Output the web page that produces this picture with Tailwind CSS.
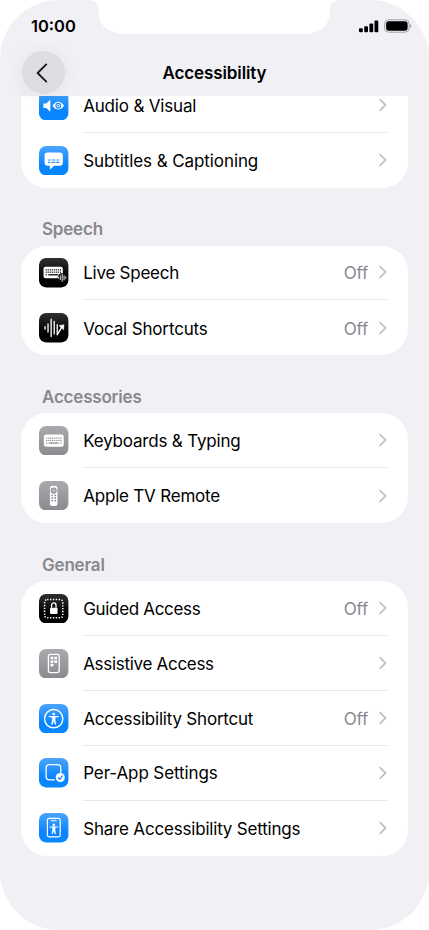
<!DOCTYPE html>
<html lang="en">
<head>
<meta charset="utf-8">
<meta name="viewport" content="width=device-width, initial-scale=1">
<title>Accessibility</title>
<script src="https://cdn.jsdelivr.net/npm/@tailwindcss/browser@4"></script>
</head>
<body class="bg-white font-['Inter','Liberation_Sans',sans-serif] text-black">
<svg width="0" height="0" class="absolute">
  <defs>
    <linearGradient id="blue" x1="0" y1="0" x2="0" y2="1"><stop offset="0" stop-color="#4ba5fc"/><stop offset=".65" stop-color="#0a84fe"/><stop offset="1" stop-color="#0788ff"/></linearGradient>
    <linearGradient id="gray" x1="0" y1="0" x2="0" y2="1"><stop offset="0" stop-color="#a9a9ae"/><stop offset="1" stop-color="#8a8a8f"/></linearGradient>
    <linearGradient id="dark" x1="0" y1="0" x2="0" y2="1"><stop offset="0" stop-color="#303030"/><stop offset=".6" stop-color="#050505"/><stop offset="1" stop-color="#000"/></linearGradient>
    <symbol id="chev" viewBox="0 0 8 14"><path d="M1.200 1.700 6.500 7 1.200 12.300" fill="none" stroke="#c2c2c6" stroke-width="1.800" stroke-linecap="round" stroke-linejoin="round"/></symbol>
    <symbol id="person" viewBox="0 0 12 14"><circle cx="6" cy="1.800" r="1.500" fill="#fff"/><path d="M1.300 4.600H10.700" stroke="#fff" stroke-width="1.300" stroke-linecap="round"/><path d="M4.300 4.400H7.700V8.500L8.500 12.800L7.300 13L6.200 9.600H5.800L4.700 13L3.500 12.800L4.300 8.500Z" fill="#fff" stroke="#fff" stroke-width=".3" stroke-linejoin="round"/></symbol>
  </defs>
</svg>
<div class="relative w-[429px] h-[930px] overflow-hidden rounded-[59px] bg-[#f1f0f5]">
  <svg class="absolute left-0 top-0" width="429" height="36" viewBox="0 0 429 36"><path d="M88 0C96 0 98.500 4 98.500 11C98.500 26 109 34.200 127 34.200H302C319 34.200 330 26 330 11C330 4 332 0 341 0Z" fill="#fff"/></svg>

  <header class="relative z-10 h-[95.500px]">
    <div class="flex h-[52px] items-center justify-between pl-[31px] pr-[17px]">
      <span class="text-[16.500px] font-semibold">10:00</span>
      <div class="flex items-center gap-[5.500px]">
        <svg width="21" height="13" viewBox="0 0 21 13"><rect x="1" y="8.300" width="3.800" height="4" rx="1"/><rect x="6.200" y="6.200" width="3.800" height="6.100" rx="1"/><rect x="11.400" y="3.500" width="3.800" height="8.800" rx="1"/><rect x="16.500" y=".5" width="3.800" height="11.800" rx="1"/></svg>
        <svg width="28" height="14" viewBox="0 0 28 14"><rect x=".6" y=".8" width="24.500" height="12.400" rx="4" fill="none" stroke="#a3a3a6"/><rect x="2.100" y="2.300" width="21.500" height="9.400" rx="2.700"/><path d="M26.200 5v4c1.600-.5 1.600-3.500 0-4" fill="#9a9a9d"/></svg>
      </div>
    </div>
    <h1 class="w-full pt-[10px] text-center text-[17px] leading-[23px] font-semibold tracking-[-0.120px]">Accessibility</h1>
    <div class="absolute left-[21px] top-[50px] flex h-[45px] w-[45px] items-center justify-center rounded-full border border-[#ececef] bg-[#dcdde1] shadow-[0_2px_18px_rgba(0,0,0,0.06)]">
      <svg width="14" height="22" viewBox="0 0 14 22" class="mr-[3px]"><path d="M11.300 2.400 2.600 11l8.700 8.600" fill="none" stroke="#161616" stroke-width="1.800" stroke-linecap="round" stroke-linejoin="round"/></svg>
    </div>
  </header>

  <main id="main" class="flex flex-col pl-[21px] pr-[21px] text-[17px]"></main>
</div>
<script>
const kb = (c) => {
  let s = '';
  for (let r = 0; r < 2; r++) for (let i = 0; i < 8; i++) s += `<rect x="${7 + i * 2}" y="${11.4 + r * 2.3}" width="1.2" height="1.200" fill="${c}"/>`;
  return s + `<rect x="7" y="16.200" width="1.200" height="1.300" fill="${c}"/><rect x="9.600" y="16.200" width="9.800" height="1.300" fill="${c}"/><rect x="21" y="16.200" width="1.200" height="1.300" fill="${c}"/>`;
};
const wave = (bars, w) => bars.map(([x, a, b]) => `<path d="M${x} ${a}V${b}" stroke="#fff" stroke-width="${w}" stroke-linecap="round"/>`).join('');
const icons = {
  av: ['blue', `<path d="M4.800 12.300H7.200L10.500 9.200Q11.200 8.700 11.200 9.700V19.500Q11.200 20.400 10.500 19.900L7.200 16.800H4.800Q4.300 16.800 4.300 16.200V12.900Q4.300 12.300 4.800 12.300Z" fill="#fff"/><path d="M13.300 14.500Q16 10.700 19 10.700Q22 10.700 24.700 14.500Q22 18.300 19 18.300Q16 18.300 13.300 14.500Z" fill="#fff"/><circle cx="19" cy="14.500" r="2.300" fill="#fff" stroke="#178bfe" stroke-width="1.100"/><circle cx="19" cy="14.500" r=".9" fill="#178bfe"/>`],
  cc: ['blue', `<path d="M8.500 6.300h12q3 0 3 3v7.200q0 3-3 3h-5.700l-3.500 3.500q-.6.400-.6-.5v-3H8.500q-3 0-3-3V9.300q0-3 3-3Z" fill="#fff"/><path d="M8.800 13.800h3.200m1 0h3.200m1 0h3M8.800 16.200h2.200m1 0h4m1 0h3.200" stroke="#3798fb" stroke-width="1.100"/>`],
  live: ['dark', `<rect x="4.500" y="8.600" width="19" height="11.500" rx="2" fill="#fff"/><g transform="translate(-.5 -.3)">${kb('#111')}</g><circle cx="23" cy="19.500" r="4.600" fill="#111"/>${wave([[19.300,18.700,20.100],[21.100,17.700,21.300],[22.900,15.900,23],[24.700,17.500,21.400],[26.300,18.700,20.200]], .8)}`],
  vocal: ['dark', wave([[6,13.500,15.800],[8.900,10.800,18.700],[12,6,23.300],[15,8.300,20.600],[18,11.500,21.500]], 1.300) + `<path d="M18.200 21 22.500 14" stroke="#fff" stroke-width="1.400" fill="none" stroke-linecap="round"/><path d="M19.800 12.500 24.600 11.600 24.300 16.500Z" fill="#fff" stroke="#fff" stroke-width=".5" stroke-linejoin="round"/>`],
  kb: ['gray', `<rect x="4.800" y="8.400" width="19.600" height="12" rx="2.200" fill="#fff"/>${kb('#8e8e93')}`],
  remote: ['gray', `<rect x="10.800" y="4.700" width="7.400" height="20" rx="2.200" fill="#fff"/><circle cx="14.500" cy="9.500" r="2.500" fill="#b4b4b8" stroke="#8e8e93" stroke-width="1"/><g fill="#8e8e93"><circle cx="13" cy="14.200" r=".9"/><circle cx="16" cy="14.200" r=".9"/><circle cx="13" cy="16.800" r=".9"/><circle cx="16" cy="16.800" r=".9"/><circle cx="13" cy="19.400" r=".9"/><circle cx="16" cy="19.400" r=".9"/></g>`],
  guided: ['dark', `<rect x="5.500" y="5.500" width="18" height="18" rx="2.500" fill="none" stroke="#fff" stroke-width="1.500" stroke-dasharray="1.350 1.480"/><rect x="10.900" y="13.500" width="7.400" height="6.300" rx="1" fill="#fff"/><path d="M12.400 13.500v-2.200a2.200 2.500 0 0 1 4.400 0v2.200" fill="none" stroke="#fff" stroke-width="1.300"/>`],
  assist: ['gray', `<rect x="9.300" y="5.300" width="10.600" height="18" rx="2" fill="none" stroke="#fff" stroke-width="1.300"/><g fill="#fff"><rect x="11.400" y="7.600" width="2.800" height="2.600" rx=".4"/><rect x="15.100" y="7.600" width="2.800" height="2.600" rx=".4"/><rect x="11.400" y="11.100" width="2.800" height="2.600" rx=".4"/><rect x="15.100" y="11.100" width="2.800" height="2.600" rx=".4"/><rect x="11.400" y="14.600" width="2.800" height="2.600" rx=".4"/></g>`],
  short: ['blue', `<circle cx="14.500" cy="14.500" r="9" fill="none" stroke="#fff" stroke-width="1.400"/><use href="#person" x="9" y="8.200" width="11" height="13"/>`],
  perapp: ['blue', `<path d="M15.300 21.500H10.500q-3.500 0-3.500-3.500V10q0-3.500 3.500-3.500h7.500q3.500 0 3.500 3.500v4.200" fill="none" stroke="#fff" stroke-width="1.300" stroke-linecap="round"/><circle cx="21" cy="19.300" r="4.500" fill="#fff"/><path d="m19.100 19.500 1.400 1.700 2.500-3.600" fill="none" stroke="#0a84fe" stroke-width="1.200" stroke-linecap="round" stroke-linejoin="round"/>`],
  share: ['blue', `<rect x="8.300" y="5.200" width="12.600" height="18.300" rx="1.800" fill="none" stroke="#fff" stroke-width="1.200"/><path d="M12.200 7.600h4.700" stroke="#fff" stroke-width="1.100" stroke-linecap="round"/><use href="#person" x="9.600" y="10" width="10" height="11.500"/>`]
};
// Rows: icon, label, shows "Off", letter spacing in px
const groups = [
  ['', [['av', 'Audio & Visual', 0, -0.18], ['cc', 'Subtitles & Captioning', 0, -0.09]]],
  ['Speech', [['live', 'Live Speech', 1, -0.25], ['vocal', 'Vocal Shortcuts', 1, -0.15]]],
  ['Accessories', [['kb', 'Keyboards & Typing', 0, -0.19], ['remote', 'Apple TV Remote', 0, -0.2]]],
  ['General', [['guided', 'Guided Access', 1, -0.32], ['assist', 'Assistive Access', 0, -0.3], ['short', 'Accessibility Shortcut', 1, -0.21], ['perapp', 'Per-App Settings', 0, -0.1], ['share', 'Share Accessibility Settings', 0, -0.19]]]
];
const esc = s => s.replace('&', '&amp;');
document.getElementById('main').innerHTML = groups.map(([title, rows], g) => `
  <section>
    ${title ? `<h2 class="flex h-[58px] items-end pb-[3.500px] pl-[21px] text-[17px] leading-[25px] font-semibold tracking-[-0.2px] text-[#88888d]">${title}</h2>` : ''}
    <div class="overflow-hidden bg-white ${g ? 'rounded-[26px]' : 'h-[92px] rounded-b-[26px]'}">
      <div class="${g ? '' : '-mt-[17.500px]'}">
      ${rows.map(([k, label, off, ls], i) => `
        <div class="flex h-[54.900px] items-center pl-[18.300px]">
          <svg width="29.400" height="29.400" viewBox="0 0 29 29" class="shrink-0"><rect width="29" height="29" rx="7" fill="url(#${icons[k][0]})"/>${icons[k][1]}</svg>
          <div class="ml-[14.500px] mr-[21px] flex h-full flex-1 items-center ${i < rows.length - 1 ? 'border-b border-[#e6e6e8]' : ''}">
            <span class="flex-1 whitespace-nowrap pt-[1.500px] leading-[18px]" style="letter-spacing:${ls}px">${esc(label)}</span>
            ${off ? '<span class="mr-[11px] pt-[1.500px] leading-[18px] tracking-[-0.2px] text-[#89898d]">Off</span>' : ''}
            <svg width="8" height="14"><use href="#chev"/></svg>
          </div>
        </div>`).join('')}
      </div>
    </div>
  </section>`).join('');
</script>
</body>
</html>
